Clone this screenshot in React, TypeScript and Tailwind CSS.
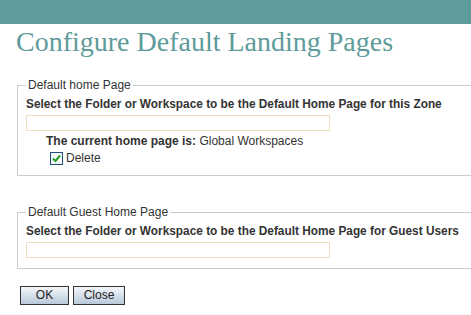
import React from "react";

const sans = "font-['Liberation_Sans',Arial,sans-serif]";

const Check: React.FC = () => (
  <span className="w-[13px] h-[13px] border border-[#1c4f7c] bg-[#f4f6f8] flex items-center justify-center">
    <svg width="9" height="9" viewBox="0 0 9 9">
      <path d="M1 4.5 L3.5 7 L8 1.5" stroke="#21a121" strokeWidth="2" fill="none" />
    </svg>
  </span>
);

const Panel: React.FC<{ legend: string; label: string; children?: React.ReactNode }> = (props) => {
  return (
    <fieldset className="ml-[17px] w-[480px] border border-[#cccccc] pl-[8px] pr-2 pt-0 pb-[10px] m-0">
      <legend className="px-[2px] text-[12px] leading-[14px] text-[#333]">{props.legend}</legend>
      <div className="mt-[5px] text-[11.85px] leading-[14px] font-bold text-[#333]">{props.label}</div>
      <div className="mt-[4px] w-[304px] h-[16px] border border-[#efdfc0] bg-white" />
      {props.children}
    </fieldset>
  );
};

export default function App() {
  return (
    <div className={`w-[471px] h-[315px] overflow-hidden bg-white ${sans}`}>
      <div className="h-[24px] bg-[#5e9b9a]" />
      <h1 className="ml-[16px] mt-[2px] font-['Liberation_Serif','Times_New_Roman',serif] text-[28px] leading-[32px] text-[#5e9b9a]">
        Configure Default Landing Pages
      </h1>
      <div className="mt-[20px]">
        <Panel
          legend="Default home Page"
          label="Select the Folder or Workspace to be the Default Home Page for this Zone"
        >
          <div className="ml-[20px] mt-[3px] text-[12px] leading-[14px] text-[#333]">
            <span className="font-bold">The current home page is: </span>
            <span>Global Workspaces</span>
          </div>
          <div className="ml-[24px] mt-[3px] flex items-center gap-[3px] text-[12px] leading-[14px] text-[#333]">
            <Check />
            <span>Delete</span>
          </div>
        </Panel>
      </div>
      <div className="mt-[29px]">
        <Panel
          legend="Default Guest Home Page"
          label="Select the Folder or Workspace to be the Default Home Page for Guest Users"
        />
      </div>
      <div className="ml-[20px] mt-[17px] flex gap-[4px]">
        <button className="w-[49px] h-[19px] border border-[#333] bg-linear-to-b from-[#f4f7fa] to-[#b9c9da] text-[12px] leading-[17px] text-[#222]">
          OK
        </button>
        <button className="w-[52px] h-[19px] border border-[#333] bg-linear-to-b from-[#f4f7fa] to-[#b9c9da] text-[12px] leading-[17px] text-[#222]">
          Close
        </button>
      </div>
    </div>
  );
}
